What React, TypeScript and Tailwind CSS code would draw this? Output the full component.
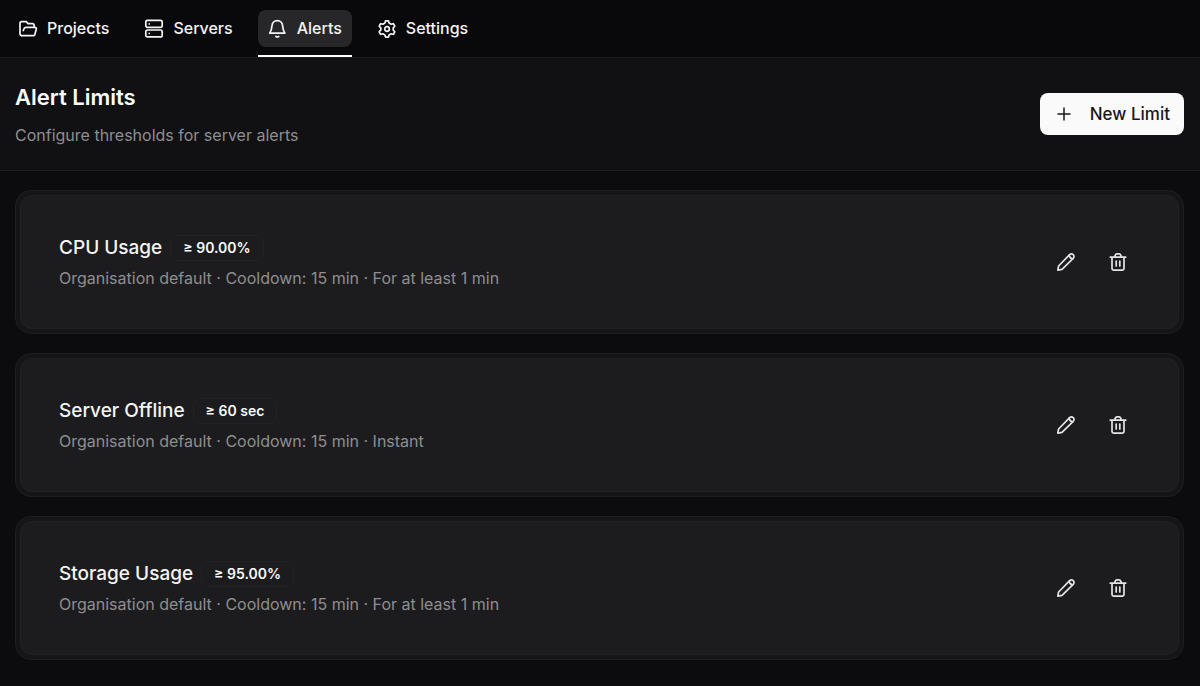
import React from 'react';

type Limit = { name: string; threshold: string; detail: string };

const limits: Limit[] = [
  { name: 'CPU Usage', threshold: '≥ 90.00%', detail: 'Organisation default · Cooldown: 15 min · For at least 1 min' },
  { name: 'Server Offline', threshold: '≥ 60 sec', detail: 'Organisation default · Cooldown: 15 min · Instant' },
  { name: 'Storage Usage', threshold: '≥ 95.00%', detail: 'Organisation default · Cooldown: 15 min · For at least 1 min' },
];

const Icon: React.FC<{ children: React.ReactNode }> = ({ children }) => (
  <svg viewBox="0 0 20 20" className="size-5 shrink-0" fill="none" stroke="currentColor" strokeWidth="1.7" strokeLinecap="round" strokeLinejoin="round" aria-hidden="true">
    {children}
  </svg>
);

const FolderIcon = () => (
  <Icon>
    <path d="M3.6 16.6h11.8a1.5 1.5 0 0 0 1.4-1l1.5-5.4c.3-1-.4-1.900-1.400-1.900H8c-.9 0-1.600.4-1.900 1.200l-.8 2" />
    <path d="M16.100 8V6.300c0-1-.7-1.700-1.700-1.700H10L8.300 2.600H3.600c-1 0-1.600.6-1.600 1.600V15c0 1 .6 1.600 1.600 1.600" />
  </Icon>
);

const ServerIcon = () => (
  <Icon>
    <rect x="1.8" y="1.4" width="16.4" height="6.9" rx="1.7" />
    <rect x="1.8" y="11" width="16.4" height="6.9" rx="1.7" />
    <path d="M5.2 4.9h.01M5.2 14.4h.01" />
  </Icon>
);

const BellIcon = () => (
  <Icon>
    <path d="M9.300 1.600c-3 0-5.100 2.200-5.300 5.100-.2 3-.7 4.900-2.300 7.400h15.200c-1.600-2.500-2.100-4.400-2.300-7.400-.2-2.900-2.300-5.100-5.300-5.100Z" />
    <path d="M7.900 17.400c.9.500 1.900.5 2.800 0" />
  </Icon>
);

const SettingsIcon = () => (
  <Icon>
    <path d="M8.900 1.800h2.200q.4 0 .5.400l.5 1.900 2 1.100 1.900-.5q.4-.1.600.3l1.100 1.900q.2.300-.1.600l-1.400 1.400v2.200l1.400 1.400q.3.300.1.600L16.600 15q-.2.400-.6.300l-1.900-.5-2 1.100-.5 1.900q-.1.400-.5.400H8.900q-.4 0-.5-.4l-.5-1.900-2-1.100-1.900.5q-.4.100-.6-.3l-1.100-1.900q-.2-.3.100-.6l1.400-1.400V8.900L2.400 7.500q-.3-.3-.1-.6L3.400 5q.2-.4.600-.3l1.900.5 2-1.100.5-1.900q.1-.4.500-.4Z" />
    <circle cx="10" cy="10" r="2.3" />
  </Icon>
);

const PlusIcon = () => (
  <Icon>
    <path d="M10 4v12M4 10h12" strokeWidth="1.5" />
  </Icon>
);

const PencilIcon = () => (
  <Icon>
    <path d="m1.800 18.200.8-4.200L13.600 2.700a2.400 2.400 0 0 1 3.600 0 2.400 2.400 0 0 1 0 3.600L6 17.400Z" />
    <path d="M13.200 3.400c.3 2 1.400 3.100 3.400 3.400" />
  </Icon>
);

const TrashIcon = () => (
  <Icon>
    <path d="M2.300 5.200h15.400M4 5.200v11.300c0 1 .6 1.600 1.600 1.600h8.800c1 0 1.600-.6 1.600-1.600V5.200M6.600 5l.7-1.900c.3-.8.800-1.200 1.600-1.200h2.200c.8 0 1.300.4 1.600 1.200l.7 1.900M8.200 9v5M11.800 9v5" />
  </Icon>
);

const tabs = [
  { label: 'Projects', icon: <FolderIcon /> },
  { label: 'Servers', icon: <ServerIcon /> },
  { label: 'Alerts', icon: <BellIcon />, active: true },
  { label: 'Settings', icon: <SettingsIcon /> },
];

const LimitCard: React.FC<{ limit: Limit }> = ({ limit }) => (
  <li className="rounded-2xl border border-[#1e1e20] bg-[#151517] p-1">
    <div className="flex items-center justify-between rounded-xl border border-[#222224] bg-[#1c1c1e] py-8 pr-10 pl-[38px]">
      <div className="py-1">
        <div className="flex items-center gap-2">
          <h2 className="text-[19px] leading-8 font-medium text-[#f4f4f5]">{limit.name}</h2>
          <span className="rounded-lg border border-[#222224] px-3 text-sm leading-6 font-semibold text-[#fafafa]">{limit.threshold}</span>
        </div>
        <p className="text-base leading-7 text-[#8e8e91]">{limit.detail}</p>
      </div>
      <div className="flex gap-3 text-[#e4e4e7]">
        <button aria-label={`Edit ${limit.name}`} className="flex size-10 items-center justify-center rounded-lg hover:bg-white/5"><PencilIcon /></button>
        <button aria-label={`Delete ${limit.name}`} className="flex size-10 items-center justify-center rounded-lg hover:bg-white/5"><TrashIcon /></button>
      </div>
    </div>
  </li>
);

const App: React.FC = () => (
  <div className="min-h-screen bg-[#0c0c0e] font-['Inter',sans-serif] text-[#f4f4f5]">
    <nav className="flex gap-[15px] border-b border-[#1b1b1d] bg-[#09090b] px-2">
      {tabs.map(tab => (
        <a
          key={tab.label}
          href="#"
          aria-current={tab.active ? 'page' : undefined}
          className={`border-b-2 pt-2.5 pb-2 ${tab.active ? 'border-white' : 'border-transparent'}`}
        >
          <span className={`flex items-center gap-[9px] rounded-lg px-2.5 py-1.5 text-base leading-[25px] font-medium ${tab.active ? 'bg-[#272729]' : ''}`}>
            {tab.icon}
            {tab.label}
          </span>
        </a>
      ))}
    </nav>

    <header className="flex items-center justify-between border-b border-[#1d1d1f] bg-[#111113] py-[18px] pr-4 pl-[15px]">
      <div>
        <h1 className="text-[22px] leading-[42px] font-semibold text-[#fafafa]">Alert Limits</h1>
        <p className="text-base leading-[34px] text-[#8e8e91]">Configure thresholds for server alerts</p>
      </div>
      <button className="flex items-center gap-4 rounded-lg bg-[#fafafa] px-3.5 py-2 text-[17px] leading-[26px] font-medium text-[#18181b]">
        <PlusIcon />
        New Limit
      </button>
    </header>

    <main className="py-[19px] pr-4 pl-[15px]">
      <ul className="flex flex-col gap-[19px]">
        {limits.map(limit => <LimitCard key={limit.name} limit={limit} />)}
      </ul>
    </main>
  </div>
);

export default App;
